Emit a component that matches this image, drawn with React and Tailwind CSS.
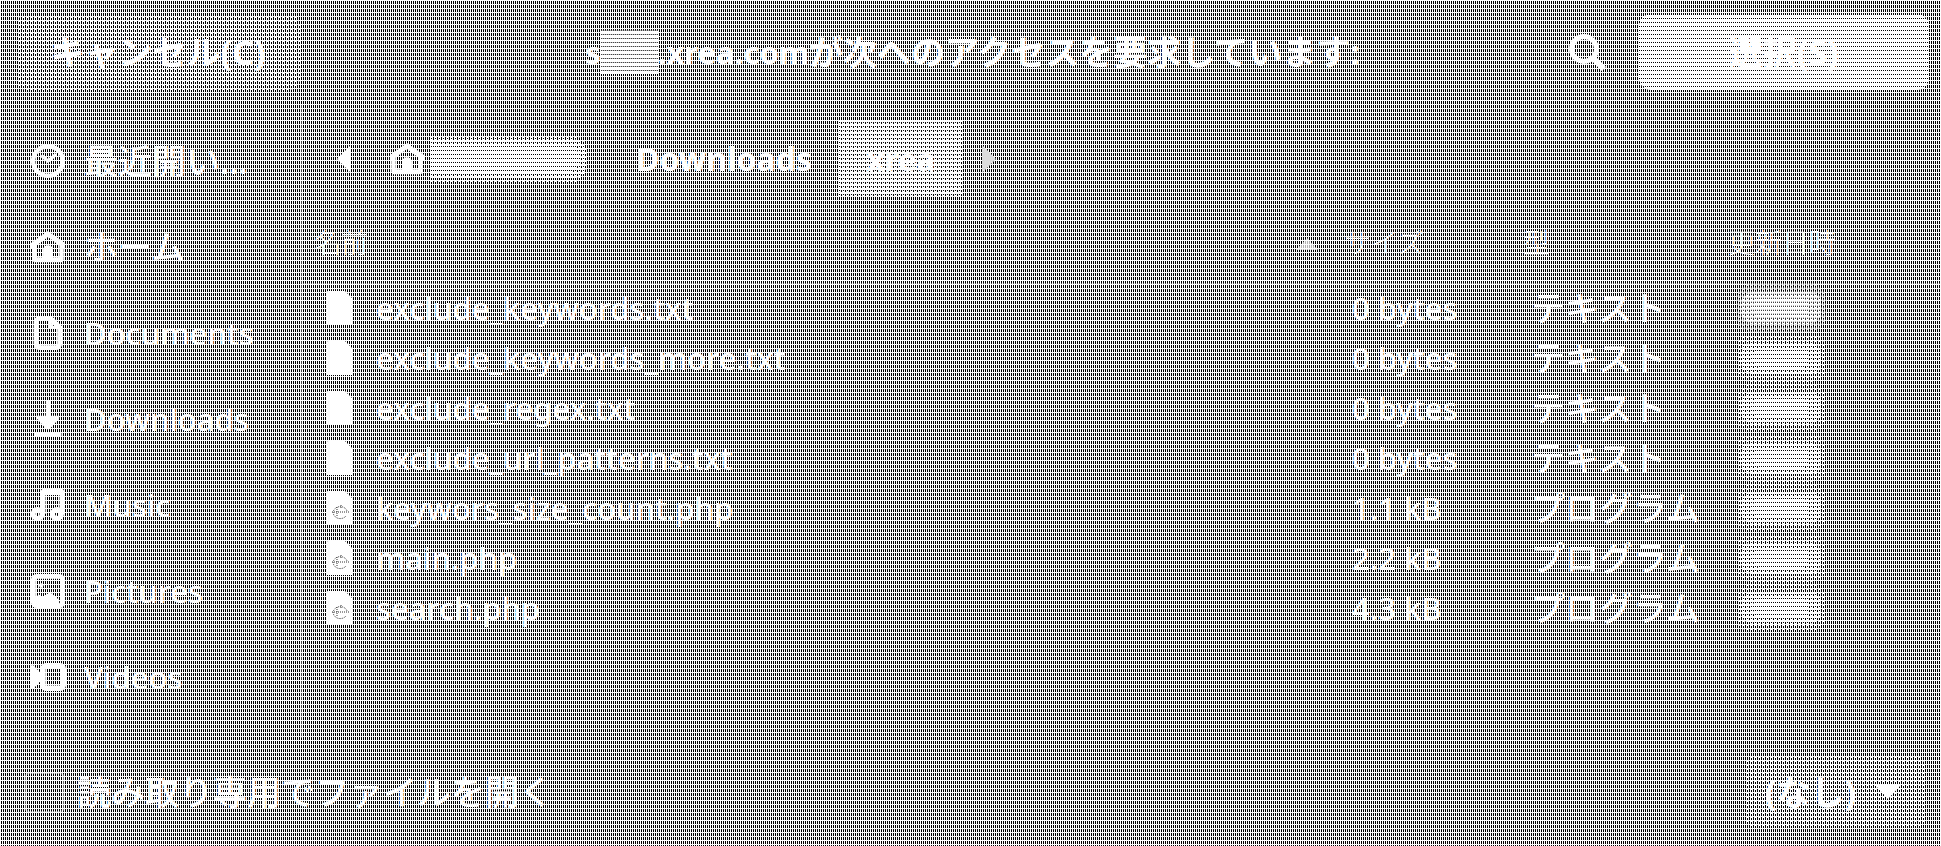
import React, { useState } from "react";

const baseDots =
  "bg-fixed [background-image:linear-gradient(#fff_1px,transparent_1px),linear-gradient(90deg,#fff_1px,#000_1px)] [background-size:4px_4px,2px_2px]";
const buttonDots =
  "bg-fixed [background-image:conic-gradient(from_270deg_at_1px_1px,#fff_25%,transparent_0),linear-gradient(#fff_1px,transparent_1px),linear-gradient(90deg,#fff_1px,#000_1px)] [background-size:4px_4px,4px_4px,2px_2px] [background-position:3px_1px,0_0,0_0]";
const midDots =
  "bg-fixed bg-white [background-image:conic-gradient(from_270deg_at_1px_1px,#000_25%,transparent_0),conic-gradient(from_270deg_at_1px_1px,#000_25%,transparent_0)] [background-size:2px_4px,4px_4px] [background-position:1px_2px,1px_3px]";
const lightDots =
  "bg-fixed bg-white [background-image:conic-gradient(from_270deg_at_1px_1px,#000_25%,transparent_0)] [background-size:2px_4px] [background-position:1px_2px]";

const jp = "text-[34px]";

const ClockIcon = () => (
  <svg viewBox="0 0 16 16" className="w-9 h-9" fill="none" stroke="#fff" strokeWidth="2">
    <circle cx="8" cy="8" r="6.6" />
    <path d="M5 5.5L8 8l3.6-3" strokeWidth="1.5" />
  </svg>
);

const HomeIcon = () => (
  <svg viewBox="0 0 16 16" className="w-9 h-9" fill="#fff" fillRule="evenodd">
    <path d="M8 .9L.4 6.2v2.3H1V13.4c0 .9.6 1.4 1.4 1.4h11.2c.8 0 1.4-.5 1.4-1.4V8.5h.6V6.2zM8 3.6l5 3.7v5.2h-2.8V9.2C10.2 8 9.3 7.2 8 7.2S5.8 8 5.8 9.2v3.3H3V7.3z" />
  </svg>
);

const DocumentIcon = () => (
  <svg viewBox="0 0 16 16" className="w-9 h-9" fill="none" stroke="#fff" strokeWidth="2.2">
    <path d="M4.5 1.5h4.7l4 4v7.2a1.8 1.8 0 0 1-1.8 1.8H4.5a1.8 1.8 0 0 1-1.8-1.8V3.3a1.8 1.8 0 0 1 1.8-1.8z" />
    <path d="M9 2v3.5h4" strokeWidth="1.5" />
  </svg>
);

const DownloadIcon = () => (
  <svg viewBox="0 0 16 16" className="w-9 h-9" fill="#fff">
    <path d="M7 0h2v6.5h4v1.3L8.7 12.6H7.3L3 7.8V6.5h4zM2 13.8h12V16H2z" />
  </svg>
);

const MusicIcon = () => (
  <svg viewBox="0 0 16 16" className="w-9 h-9" fill="none" stroke="#fff" strokeWidth="2.2">
    <circle cx="3.4" cy="12" r="2" />
    <circle cx="12" cy="12" r="2" />
    <path d="M5.8 12V2.6C5.8 1.8 6.2 1.5 7 1.5h6c.8 0 1.2.4 1.2 1.1V12M6 2.5h8" />
  </svg>
);

const PictureIcon = () => (
  <svg viewBox="0 0 16 16" className="w-9 h-9" fill="none" stroke="#fff" strokeWidth="2.2">
    <rect x="1.5" y="1.5" width="13" height="13" rx="1.5" />
    <path d="M2 14v-3l2-1.5 1.5 1L9 8.5l4 3.5V14z" fill="#fff" stroke="none" />
    <circle cx="5" cy="5.5" r="1" fill="#fff" stroke="none" />
  </svg>
);

const VideoIcon = () => (
  <svg viewBox="0 0 16 16" className="w-9 h-9" fill="none" stroke="#fff" strokeWidth="2.4">
    <rect x="5.8" y="3" width="9" height="10" rx="1.3" />
    <path d="M0 2.8h1.5L4.5 6v4l-3 3.2H0z" fill="#fff" stroke="none" />
  </svg>
);

const FileIcon = ({ php }) => (
  <svg viewBox="0 0 28 36" className="w-7 h-9 shrink-0" fill="none">
    <path d="M2 1h17l8 8v25a1 1 0 0 1-1 1H1a1 1 0 0 1-1-1V3a2 2 0 0 1 2-2z" fill="#fff" />
    {php && (
      <path d="M6 22h17M20 26a7 6 0 1 1 1-5M11 17v9M15 15v4" stroke="#333" strokeWidth="1" strokeDasharray="1 1" />
    )}
  </svg>
);

const places = [
  { label: "最近開い...", icon: ClockIcon, japanese: true },
  { label: "ホーム", icon: HomeIcon, japanese: true },
  { label: "Documents", icon: DocumentIcon },
  { label: "Downloads", icon: DownloadIcon },
  { label: "Music", icon: MusicIcon },
  { label: "Pictures", icon: PictureIcon },
  { label: "Videos", icon: VideoIcon },
];

const files = [
  { name: "exclude_keywords.txt", size: "0 bytes", type: "テキスト" },
  { name: "exclude_keywords_more.txt", size: "0 bytes", type: "テキスト" },
  { name: "exclude_regex.txt", size: "0 bytes", type: "テキスト" },
  { name: "exclude_url_patterns.txt", size: "0 bytes", type: "テキスト" },
  { name: "keywors_size_count.php", size: "1.1 kB", type: "プログラム", php: true },
  { name: "main.php", size: "2.2 kB", type: "プログラム", php: true },
  { name: "search.php", size: "4.3 kB", type: "プログラム", php: true },
];

const App = () => {
  const [readOnly, setReadOnly] = useState(false);

  return (
    <div
      className={`flex flex-col min-h-screen text-white text-[31px] leading-10 font-medium font-['Noto_Sans','Noto_Sans_CJK_JP',sans-serif] ${baseDots}`}
    >
      {/* Header */}
      <header className="grid grid-cols-[1fr_auto_1fr] items-center h-[104px] pl-4 pr-3">
        <button className={`w-[284px] h-[76px] rounded-xl font-bold ${jp} ${buttonDots}`}>キャンセル(C)</button>
        <h1 className="flex items-center font-bold whitespace-nowrap">
          <span>s</span>
          <span className={`w-[57px] h-11 ${lightDots}`} />
          <span>.xrea.com</span>
          <span className={jp}>が次へのアクセスを要求しています:</span>
        </h1>
        <div className="flex items-center justify-end gap-8">
          <button aria-label="検索">
            <svg viewBox="0 0 40 40" className="w-10 h-10" fill="none" stroke="#fff" strokeWidth="5">
              <circle cx="17" cy="17" r="12.5" />
              <path d="M26 26l11 11" strokeWidth="6" />
            </svg>
          </button>
          <button className={`w-[290px] h-[76px] rounded-xl font-bold ${jp} ${lightDots}`}>選択(S)</button>
        </div>
      </header>

      <div className="flex grow">
        {/* Sidebar */}
        <nav className="w-[302px] shrink-0 pt-3.5 border-r border-white/30">
          {places.map((place) => (
            <a key={place.label} href="#" className="flex items-center gap-[18px] h-[86px] pl-[30px] whitespace-nowrap">
              <place.icon />
              <span className={place.japanese ? jp : ""}>{place.label}</span>
            </a>
          ))}
        </nav>

        {/* Main Content */}
        <main className="grow">
          <div className="flex items-center h-[100px] pt-2.5 pl-[34px] font-bold">
            <button aria-label="前へ" className="pr-4">
              <svg viewBox="0 0 16 28" className="w-4 h-7" fill="#fff">
                <path d="M15 0v28L1 14z" />
              </svg>
            </button>
            <button className="flex items-center gap-1.5 h-[76px] pl-5 border-l border-white/30">
              <HomeIcon />
              <span className={`flex items-center w-[156px] h-12 rounded-r-2xl ${buttonDots}`}>
                <span className={`flex items-center w-full h-10 rounded-r-2xl pr-2 ${midDots}`}>
                  <span className={`w-full h-7 rounded-r-xl ${lightDots}`} />
                </span>
              </span>
            </button>
            <button className="h-[76px] px-[27px] ml-[22px] text-[32px]">Downloads</button>
            <button className={`w-[124px] h-[76px] ${midDots}`}>xrea</button>
            <button aria-label="次へ" className="shrink-0 ml-[18px]">
              <svg viewBox="0 0 16 28" className="w-4 h-7" fill="#ddd">
                <path d="M1 0L15 14L1 28z" />
              </svg>
            </button>
          </div>

          <table className="w-full table-fixed text-left">
            <thead>
              <tr className="h-[79px] border-b border-white/30 text-[27px]">
                <th className="font-light pl-3">
                  <div className="flex items-center justify-between pr-5">
                    名前
                    <svg viewBox="0 0 26 14" className="w-[26px] h-[14px]" fill="#fff" fillOpacity="0.7">
                      <path d="M13 2l11 12H2z" />
                    </svg>
                  </div>
                </th>
                <th className="w-[175px] font-light pl-1">サイズ</th>
                <th className="w-[205px] font-light pl-2">型</th>
                <th className="w-[221px] font-light pl-2">更新日時</th>
              </tr>
            </thead>
            <tbody>
              {files.map((file) => (
                <tr key={file.name} className="h-[50px] whitespace-nowrap">
                  <td className="pl-6">
                    <div className="flex items-center gap-[22px]">
                      <FileIcon php={file.php} />
                      {file.name}
                    </div>
                  </td>
                  <td className="pl-3">{file.size}</td>
                  <td className={`pl-4 ${jp}`}>{file.type}</td>
                  <td className="pl-4">
                    <div className={`flex items-center justify-center w-[90px] h-12 rounded-2xl ${buttonDots}`}>
                      <div className={`flex items-center justify-center w-20 h-8 rounded-xl ${midDots}`}>
                        <div className={`w-14 h-5 rounded-lg ${lightDots}`} />
                      </div>
                    </div>
                  </td>
                </tr>
              ))}
            </tbody>
          </table>
        </main>
      </div>

      {/* Footer */}
      <footer className="flex items-center justify-between h-[108px] pl-6 pr-4">
        <label className={`flex items-center gap-3 ${jp}`}>
          <input
            type="checkbox"
            checked={readOnly}
            onChange={(e) => setReadOnly(e.target.checked)}
            className="appearance-none w-[41px] h-[41px] rounded-md border-2 border-white/40 checked:bg-white"
          />
          読み取り専用でファイルを開く
        </label>
        <div className="relative">
          <select
            aria-label="フィルター"
            className={`appearance-none w-[180px] h-[74px] pl-5 rounded-xl font-bold ${jp} ${buttonDots}`}
          >
            <option>(なし)</option>
          </select>
          <svg viewBox="0 0 26 14" className="absolute right-6 top-[30px] w-[26px] h-[14px] pointer-events-none" fill="#fff">
            <path d="M0 0h26L13 14z" />
          </svg>
        </div>
      </footer>
    </div>
  );
};

export default App;
